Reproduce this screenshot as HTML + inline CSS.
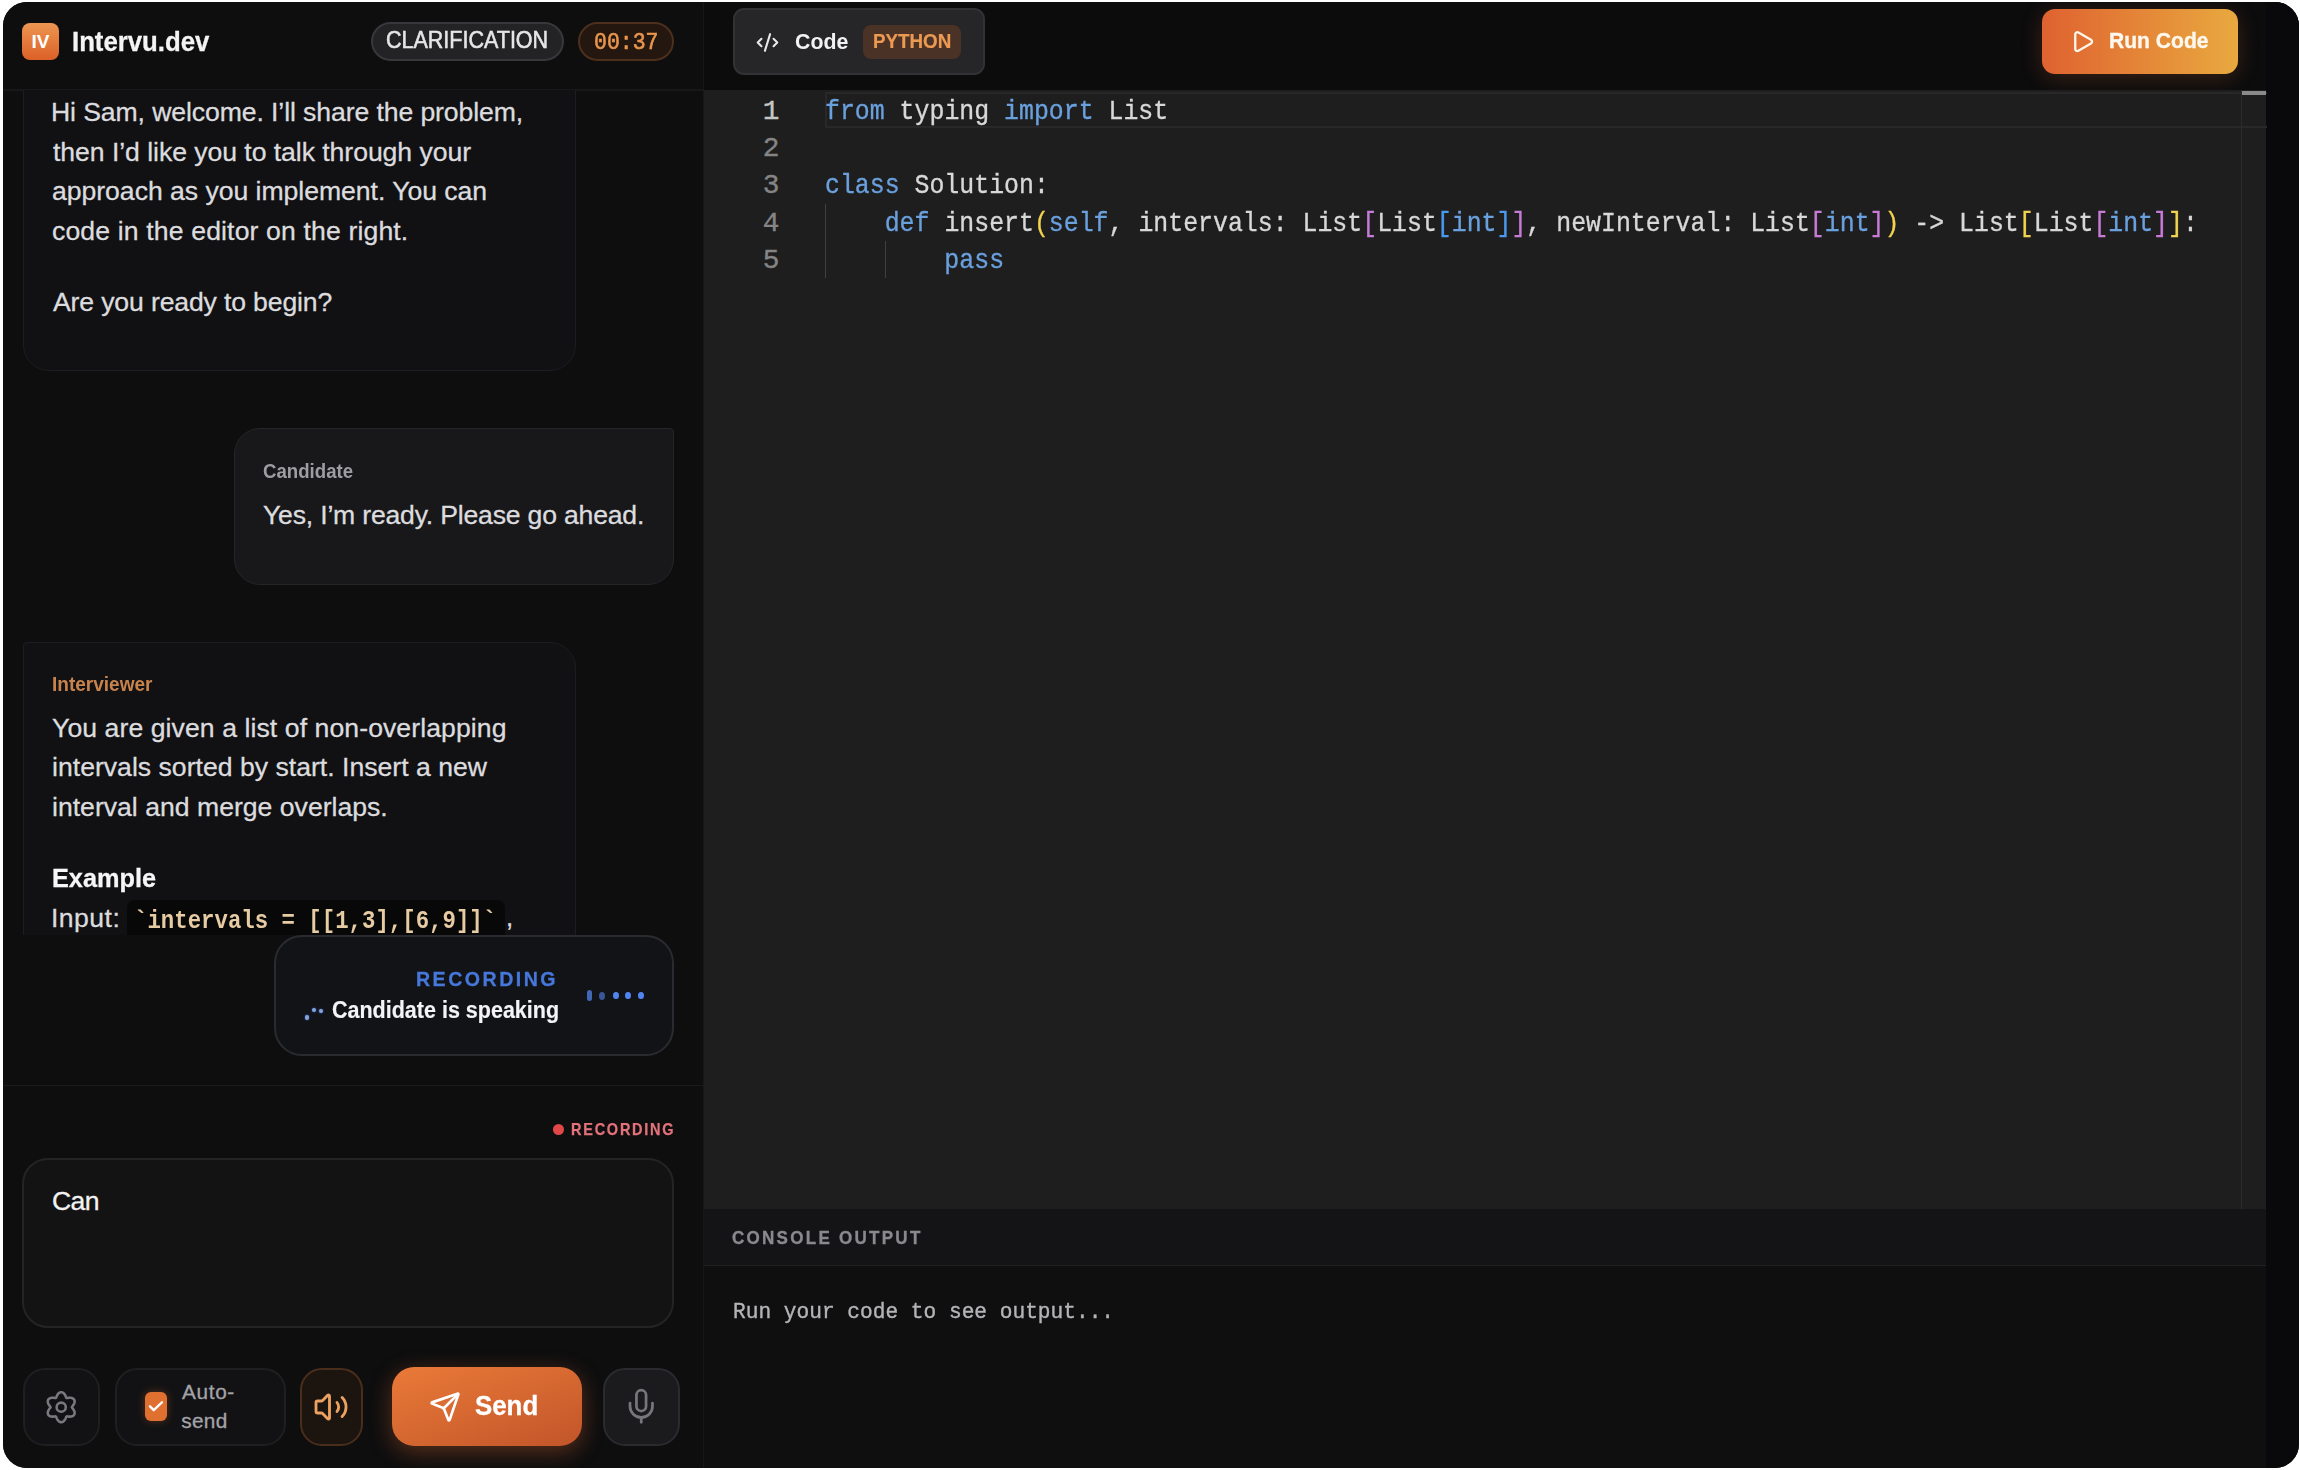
<!DOCTYPE html>
<html><head><meta charset="utf-8">
<style>
*{box-sizing:border-box;margin:0;padding:0}
html,body{width:2300px;height:1470px;background:#fff;overflow:hidden}
body{font-family:"Liberation Sans",sans-serif;position:relative}
.mono{font-family:"Liberation Mono",monospace}
.abs{position:absolute}
#frame{position:absolute;left:0;top:0;width:2300px;height:1470px;clip-path:inset(2px 1px 2px 3px round 24px);background:#0c0c0d}
.txt{position:absolute;white-space:pre;line-height:1;-webkit-text-stroke:0.3px currentColor}
svg{position:absolute;overflow:visible}
.kw{color:#6aa0de}.b1{color:#f2d34f}.b2{color:#c77ad6}.b3{color:#4b98f0}
</style></head>
<body>
<div id="frame">
<!-- LEFT PANEL -->
<div class="abs" style="left:0;top:0;width:703px;height:1470px;background:#0e0e0f"></div>
<div class="abs" style="left:703px;top:0;width:1px;height:1470px;background:#18181b"></div>
<!-- header -->
<div class="abs" style="left:0;top:89px;width:703px;height:2px;background:#18181a"></div>
<div class="abs" style="left:22px;top:23px;width:37px;height:37px;border-radius:8px;background:linear-gradient(#ec9652,#dc6028)"></div>
<div class="txt" style="left:22px;top:32px;width:37px;text-align:center;font-size:19px;font-weight:bold;color:#fff;-webkit-text-stroke:0">IV</div>
<div class="txt" id="t_logo" style="left:71.64px;top:28.6px;font-size:26.74px;font-weight:bold;color:#f4f4f4;letter-spacing:0px;transform:scaleX(0.9627);transform-origin:0 0">Intervu.dev</div>
<div class="abs" style="left:371px;top:22px;width:193px;height:39px;border-radius:20px;background:#232326;border:2px solid #38383c"></div>
<div class="txt" id="t_clar" style="left:385.90px;top:28.94px;font-size:23.69px;color:#e6e6e6;letter-spacing:0px;transform:scaleX(0.9080);transform-origin:0 0;-webkit-text-stroke:0.55px currentColor">CLARIFICATION</div>
<div class="abs" style="left:578px;top:22px;width:96px;height:39px;border-radius:20px;background:#24170f;border:2px solid #4d2f1c"></div>
<div class="txt mono" id="t_timer" style="left:593.66px;top:30.57px;font-size:23.53px;color:#e8964e;letter-spacing:0px;transform:scaleX(0.9130);transform-origin:0 0;-webkit-text-stroke:0.6px currentColor">00:37</div>

<!-- chat scroll area -->
<div class="abs" style="left:0;top:90px;width:703px;height:845px;overflow:hidden">
  <!-- msg1 -->
  <div class="abs" style="left:23px;top:-60px;width:553px;height:341px;border-radius:4px 4px 26px 26px;background:#111114;border:1px solid #1d1d21"></div>
  <!-- candidate -->
  <div class="abs" style="left:234px;top:338px;width:440px;height:157px;border-radius:26px 4px 26px 26px;background:#18181b;border:1px solid #252529"></div>
  <!-- interviewer -->
  <div class="abs" style="left:23px;top:552px;width:553px;height:400px;border-radius:4px 26px 26px 26px;background:#111114;border:1px solid #1d1d21"></div>
</div>
<div id="chattext">
  <div class="txt" id="m1l1" style="left:51.00px;top:98.98px;font-size:26.60px;color:#dcdcdf;letter-spacing:-0.095px">Hi Sam, welcome. I’ll share the problem,</div>
  <div class="txt" id="m1l2" style="left:53.00px;top:138.78px;font-size:26.60px;color:#dcdcdf;letter-spacing:-0.049px">then I’d like you to talk through your</div>
  <div class="txt" id="m1l3" style="left:52.00px;top:178.48px;font-size:26.60px;color:#dcdcdf;letter-spacing:-0.030px">approach as you implement. You can</div>
  <div class="txt" id="m1l4" style="left:52.00px;top:218.08px;font-size:26.60px;color:#dcdcdf;letter-spacing:0.142px">code in the editor on the right.</div>
  <div class="txt" id="m1l5" style="left:53.00px;top:289.38px;font-size:26.60px;color:#dcdcdf;letter-spacing:-0.141px">Are you ready to begin?</div>

  <div class="txt" id="c_lab" style="left:263.04px;top:462.11px;font-size:19.48px;font-weight:bold;color:#9d9da2;letter-spacing:0px;transform:scaleX(0.9570);transform-origin:0 0;-webkit-text-stroke:0">Candidate</div>
  <div class="txt" id="c_l1" style="left:263.00px;top:502.08px;font-size:26.60px;color:#dcdcdf;letter-spacing:-0.194px">Yes, I’m ready. Please go ahead.</div>

  <div class="txt" id="i_lab" style="left:51.63px;top:675.01px;font-size:19.48px;font-weight:bold;color:#c8834c;letter-spacing:0px;transform:scaleX(0.9775);transform-origin:0 0;-webkit-text-stroke:0">Interviewer</div>
  <div class="txt" id="i_l1" style="left:52.00px;top:714.78px;font-size:26.60px;color:#dcdcdf;letter-spacing:0.079px">You are given a list of non-overlapping</div>
  <div class="txt" id="i_l2" style="left:52.00px;top:754.48px;font-size:26.60px;color:#dcdcdf;letter-spacing:0.013px">intervals sorted by start. Insert a new</div>
  <div class="txt" id="i_l3" style="left:52.00px;top:793.98px;font-size:26.60px;color:#dcdcdf;letter-spacing:0.007px">interval and merge overlaps.</div>
  <div class="txt" id="i_ex" style="left:52.05px;top:864.88px;font-size:26.60px;font-weight:bold;color:#f6f6f6;letter-spacing:0px;transform:scaleX(0.9509);transform-origin:0 0">Example</div>
</div>
<div class="abs" style="left:0;top:90px;width:703px;height:845px;overflow:hidden">
  <div class="abs" style="left:127px;top:810px;width:378px;height:50px;border-radius:8px;background:#080809"></div>
  <div class="txt mono" id="i_code" style="left:134px;top:818.9px;font-size:25px;font-weight:bold;color:#e6cba3;transform:scaleX(0.894);transform-origin:0 0;-webkit-text-stroke:0">`intervals = [[1,3],[6,9]]`</div>
  <div class="txt" style="left:506px;top:815px;font-size:25.8px;color:#dcdcdf">,</div>
</div>

<div class="txt" id="i_in" style="left:51.00px;top:904.78px;font-size:26.60px;color:#dcdcdf;letter-spacing:0.460px">Input:</div>
<!-- recording bubble -->
<div class="abs" style="left:274px;top:935px;width:400px;height:121px;border-radius:28px;background:#121317;border:2px solid #2a2b30"></div>
<div class="txt" id="r_lab" style="left:416.20px;top:968.52px;font-size:20.64px;font-weight:bold;letter-spacing:2.605px;color:#4677da;-webkit-text-stroke:0.3px currentColor;transform:scaleX(0.950);transform-origin:0 0">RECORDING</div>
<div class="txt" id="r_txt" style="left:331.61px;top:999.43px;font-size:23.11px;font-weight:bold;color:#f4f4f6;letter-spacing:0px;transform:scaleX(0.9305);transform-origin:0 0;-webkit-text-stroke:0.15px currentColor">Candidate is speaking</div>
<div class="abs" style="left:304.9px;top:1015.3px;width:4.4px;height:4.4px;border-radius:50%;background:#86a4dc;box-shadow:0 0 2px #3a6ad0"></div>
<div class="abs" style="left:311.7px;top:1008.2px;width:4.2px;height:4.2px;border-radius:50%;background:#86a4dc;box-shadow:0 0 2px #3a6ad0"></div>
<div class="abs" style="left:318.6px;top:1009.2px;width:4.2px;height:4.2px;border-radius:50%;background:#86a4dc;box-shadow:0 0 2px #3a6ad0"></div>
<div class="abs" style="left:586.8px;top:990.1px;width:5.6px;height:11px;border-radius:3px;background:#4066b4;filter:blur(0.3px)"></div>
<div class="abs" style="left:598.8px;top:991.6px;width:6px;height:8px;border-radius:50%;background:#3a5696;filter:blur(0.3px)"></div>
<div class="abs" style="left:612.5px;top:991.8px;width:6px;height:7.6px;border-radius:50%;background:#5084ee;filter:blur(0.3px)"></div>
<div class="abs" style="left:624.9px;top:991.8px;width:6px;height:7.6px;border-radius:50%;background:#5084ee;filter:blur(0.3px)"></div>
<div class="abs" style="left:638px;top:991.8px;width:6px;height:7.6px;border-radius:50%;background:#5084ee;filter:blur(0.3px)"></div>

<!-- chat bottom border -->
<div class="abs" style="left:0;top:1085px;width:703px;height:1px;background:#1b1b1e"></div>

<!-- composer -->
<div class="abs" style="left:553px;top:1124px;width:11px;height:11px;border-radius:50%;background:#e04848"></div>
<div class="txt" id="rec2" style="left:570.60px;top:1121.9px;font-size:16.86px;font-weight:bold;letter-spacing:2.035px;color:#e3727a;-webkit-text-stroke:0.25px currentColor;transform:scaleX(0.860);transform-origin:0 0">RECORDING</div>
<div class="abs" style="left:22px;top:1158px;width:652px;height:170px;border-radius:26px;background:#131314;border:2px solid #242426"></div>
<div class="txt" id="can" style="left:52.00px;top:1188.48px;font-size:26.60px;color:#f2f2f2;letter-spacing:-0.600px">Can</div>

<!-- buttons -->
<div class="abs" style="left:23px;top:1368px;width:77px;height:78px;border-radius:22px;background:#121214;border:2px solid #1f1f22"></div>
<svg style="left:45.3px;top:1390.8px" width="32.4" height="32.4" viewBox="0 0 24 24" fill="none" stroke="#78787e" stroke-width="1.9" stroke-linecap="round" stroke-linejoin="round"><path d="M19.90 12.00 L20.03 12.28 L20.23 12.58 L20.47 12.89 L20.72 13.23 L20.97 13.58 L21.21 13.96 L21.43 14.35 L21.62 14.76 L21.78 15.18 L21.88 15.60 L21.94 16.02 L21.94 16.43 L21.89 16.82 L21.78 17.20 L21.61 17.55 L21.39 17.87 L21.12 18.15 L20.80 18.40 L20.45 18.60 L20.06 18.76 L19.64 18.88 L19.20 18.95 L18.75 18.99 L18.30 19.00 L17.86 18.98 L17.42 18.94 L17.01 18.89 L16.62 18.84 L16.26 18.81 L15.95 18.84 L15.77 19.09 L15.62 19.42 L15.46 19.78 L15.30 20.17 L15.12 20.56 L14.91 20.96 L14.68 21.35 L14.42 21.71 L14.14 22.05 L13.83 22.36 L13.49 22.62 L13.14 22.82 L12.77 22.98 L12.39 23.07 L12.00 23.10 L11.61 23.07 L11.23 22.98 L10.86 22.82 L10.51 22.62 L10.17 22.36 L9.86 22.05 L9.58 21.71 L9.32 21.35 L9.09 20.96 L8.88 20.56 L8.70 20.17 L8.54 19.78 L8.38 19.42 L8.23 19.09 L8.05 18.84 L7.74 18.81 L7.38 18.84 L6.99 18.89 L6.58 18.94 L6.14 18.98 L5.70 19.00 L5.25 18.99 L4.80 18.95 L4.36 18.88 L3.94 18.76 L3.55 18.60 L3.20 18.40 L2.88 18.15 L2.61 17.87 L2.39 17.55 L2.22 17.20 L2.11 16.82 L2.06 16.43 L2.06 16.02 L2.12 15.60 L2.22 15.18 L2.38 14.76 L2.57 14.35 L2.79 13.96 L3.03 13.58 L3.28 13.23 L3.53 12.89 L3.77 12.58 L3.97 12.28 L4.10 12.00 L3.97 11.72 L3.77 11.42 L3.53 11.11 L3.28 10.77 L3.03 10.42 L2.79 10.04 L2.57 9.65 L2.38 9.24 L2.22 8.82 L2.12 8.40 L2.06 7.98 L2.06 7.57 L2.11 7.18 L2.22 6.80 L2.39 6.45 L2.61 6.13 L2.88 5.85 L3.20 5.60 L3.55 5.40 L3.94 5.24 L4.36 5.12 L4.80 5.05 L5.25 5.01 L5.70 5.00 L6.14 5.02 L6.58 5.06 L6.99 5.11 L7.38 5.16 L7.74 5.19 L8.05 5.16 L8.23 4.91 L8.38 4.58 L8.54 4.22 L8.70 3.83 L8.88 3.44 L9.09 3.04 L9.32 2.65 L9.58 2.29 L9.86 1.95 L10.17 1.64 L10.51 1.38 L10.86 1.18 L11.23 1.02 L11.61 0.93 L12.00 0.90 L12.39 0.93 L12.77 1.02 L13.14 1.18 L13.49 1.38 L13.83 1.64 L14.14 1.95 L14.42 2.29 L14.68 2.65 L14.91 3.04 L15.12 3.44 L15.30 3.83 L15.46 4.22 L15.62 4.58 L15.77 4.91 L15.95 5.16 L16.26 5.19 L16.62 5.16 L17.01 5.11 L17.42 5.06 L17.86 5.02 L18.30 5.00 L18.75 5.01 L19.20 5.05 L19.64 5.12 L20.06 5.24 L20.45 5.40 L20.80 5.60 L21.12 5.85 L21.39 6.13 L21.61 6.45 L21.78 6.80 L21.89 7.18 L21.94 7.57 L21.94 7.98 L21.88 8.40 L21.78 8.82 L21.62 9.24 L21.43 9.65 L21.21 10.04 L20.97 10.42 L20.72 10.77 L20.47 11.11 L20.23 11.42 L20.03 11.72Z"/><circle cx="12" cy="12" r="3.4"/></svg>

<div class="abs" style="left:115px;top:1368px;width:171px;height:78px;border-radius:22px;background:#121214;border:2px solid #1f1f22"></div>
<div class="abs" style="left:145px;top:1392px;width:22px;height:29px;border-radius:6px;background:#e07030;box-shadow:0 0 8px rgba(224,112,48,.35)"></div>
<svg style="left:147px;top:1397px" width="18" height="18" viewBox="0 0 24 24" fill="none" stroke="#fff" stroke-width="3.2" stroke-linecap="round" stroke-linejoin="round"><path d="M4 12.5l5 5L20 7"/></svg>
<div class="txt" id="auto1" style="left:182.00px;top:1381.50px;font-size:20.79px;color:#a4a4a8;letter-spacing:0.650px">Auto-</div>
<div class="txt" id="auto2" style="left:181.20px;top:1410.70px;font-size:20.79px;color:#a4a4a8;letter-spacing:0.333px">send</div>

<div class="abs" style="left:300px;top:1368px;width:63px;height:78px;border-radius:22px;background:#1c140f;border:2px solid #4a2e1c"></div>
<svg style="left:313px;top:1392px" width="36" height="30" viewBox="0 0 24 20" fill="none" stroke="#eba261" stroke-width="1.9" stroke-linecap="round" stroke-linejoin="round"><path d="M11 2.7a.7.7 0 0 0-1.2-.5L6.4 5.6A1.4 1.4 0 0 1 5.4 6H3a1 1 0 0 0-1 1v6a1 1 0 0 0 1 1h2.4a1.4 1.4 0 0 1 1 .4l3.4 3.4a.7.7 0 0 0 1.2-.5z"/><path d="M16 7a5 5 0 0 1 0 6"/><path d="M19.4 16.4a9 9 0 0 0 0-12.7"/></svg>

<div class="abs" style="left:392px;top:1367px;width:190px;height:79px;border-radius:22px;background:linear-gradient(160deg,#ea7a38,#c2552a);box-shadow:0 6px 22px rgba(232,110,50,.35)"></div>
<svg style="left:429px;top:1391px" width="32" height="32" viewBox="0 0 24 24" fill="none" stroke="#fff" stroke-width="2" stroke-linecap="round" stroke-linejoin="round"><path d="M14.536 21.686a.5.5 0 0 0 .937-.024l6.5-19a.496.496 0 0 0-.635-.635l-19 6.5a.5.5 0 0 0-.024.937l7.93 3.18a2 2 0 0 1 1.112 1.11z"/><path d="m21.854 2.147-10.94 10.939"/></svg>
<div class="txt" id="send" style="left:474.63px;top:1393.01px;font-size:27.04px;font-weight:bold;color:#fff;letter-spacing:0px;transform:scaleX(0.9562);transform-origin:0 0;-webkit-text-stroke:0.3px currentColor">Send</div>

<div class="abs" style="left:603px;top:1368px;width:77px;height:78px;border-radius:22px;background:#1b1b1e;border:2px solid #2b2b2f"></div>
<svg style="left:622px;top:1387px" width="38.5" height="38.5" viewBox="0 0 24 24" fill="none" stroke="#76767c" stroke-width="1.7" stroke-linecap="round" stroke-linejoin="round"><path d="M12 2a3 3 0 0 0-3 3v7a3 3 0 0 0 6 0V5a3 3 0 0 0-3-3Z"/><path d="M19 10v2a7 7 0 0 1-14 0v-2"/><line x1="12" x2="12" y1="19" y2="22"/></svg>

<!-- RIGHT PANEL -->
<div class="abs" style="left:704px;top:0;width:1596px;height:90px;background:#0c0c0d"></div>
<!-- code tab -->
<div class="abs" style="left:733px;top:8px;width:252px;height:67px;border-radius:11px;background:#262629;border:2px solid #323235"></div>
<svg style="left:755px;top:30px" width="25" height="25" viewBox="0 0 24 24" fill="none" stroke="#e8e8ea" stroke-width="2" stroke-linecap="round" stroke-linejoin="round"><path d="m17.8 15.6 3.6-3.6-3.6-3.6"/><path d="m6.2 8.4-3.6 3.6 3.6 3.6"/><path d="m14.5 4-5 16"/></svg>
<div class="txt" id="t_code" style="left:794.64px;top:29.70px;font-size:22.67px;font-weight:bold;color:#f2f2f2;letter-spacing:0px;transform:scaleX(0.9411);transform-origin:0 0;-webkit-text-stroke:0">Code</div>
<div class="abs" style="left:863px;top:25px;width:98px;height:34px;border-radius:8px;background:#4a3226"></div>
<div class="txt" id="t_py" style="left:873.05px;top:31.66px;font-size:19.77px;font-weight:bold;color:#ec9a52;letter-spacing:0px;transform:scaleX(0.9500);transform-origin:0 0;-webkit-text-stroke:0.2px currentColor">PYTHON</div>
<!-- run code -->
<div class="abs" style="left:2042px;top:9px;width:196px;height:65px;border-radius:13px;background:linear-gradient(90deg,#df6230,#e9a93f);box-shadow:0 4px 22px rgba(225,110,50,.22)"></div>
<svg style="left:2070px;top:29.2px" width="25.2" height="25.2" viewBox="0 0 24 24" fill="none" stroke="#fff6ea" stroke-width="2.2" stroke-linecap="round" stroke-linejoin="round"><path d="M5 5a2 2 0 0 1 3.008-1.728l11.997 6.998a2 2 0 0 1 .003 3.458l-12 7A2 2 0 0 1 5 19z"/></svg>
<div class="txt" id="t_run" style="left:2108.87px;top:29.72px;font-size:22.53px;font-weight:bold;color:#fff8ee;letter-spacing:0px;transform:scaleX(0.9362);transform-origin:0 0;-webkit-text-stroke:0.35px currentColor">Run Code</div>

<!-- editor -->
<div class="abs" style="left:704px;top:90px;width:1562px;height:1119px;background:#1e1e1e"></div>
<div class="abs" style="left:2266px;top:0;width:34px;height:1470px;background:#09090b"></div>
<!-- scrollbar -->
<!-- current line -->
<div class="abs" style="left:824.5px;top:91.5px;width:1442px;height:36.5px;border:2.5px solid #282828;border-right:none"></div>
<div class="abs" style="left:2241px;top:90px;width:1px;height:1119px;background:#2c2c2c"></div>
<div class="abs" style="left:2242px;top:91px;width:24px;height:4px;background:#8a8a8a"></div>
<!-- indent guides -->
<div class="abs" style="left:825px;top:204px;width:1px;height:74px;background:#404040"></div>
<div class="abs" style="left:885px;top:241px;width:1px;height:37px;background:#404040"></div>
<!-- line numbers -->
<div class="mono" style="position:absolute;left:741px;top:92.9px;width:60px;text-align:center;font-size:27.8px;line-height:37.3px;color:#858585;-webkit-text-stroke:0.35px currentColor"><div style="color:#c6c6c6">1</div><div>2</div><div>3</div><div>4</div><div>5</div></div>
<div class="mono" id="code" style="position:absolute;left:825px;top:92.9px;font-size:27.8px;line-height:37.3px;color:#d8d8d8;white-space:pre;-webkit-text-stroke:0.35px currentColor;transform:scaleX(0.8945);transform-origin:0 0"><div><span class="kw">from</span> typing <span class="kw">import</span> List</div><div> </div><div><span class="kw">class</span> Solution:</div><div>    <span class="kw">def</span> insert<span class="b1">(</span><span class="kw">self</span>, intervals: List<span class="b2">[</span>List<span class="b3">[</span><span class="kw">int</span><span class="b3">]</span><span class="b2">]</span>, newInterval: List<span class="b2">[</span><span class="kw">int</span><span class="b2">]</span><span class="b1">)</span> -&gt; List<span class="b1">[</span>List<span class="b2">[</span><span class="kw">int</span><span class="b2">]</span><span class="b1">]</span>:</div><div>        <span class="kw">pass</span></div></div>

<!-- console -->
<div class="abs" style="left:704px;top:1209px;width:1562px;height:56px;background:#141416"></div>
<div class="abs" style="left:704px;top:1265px;width:1562px;height:1px;background:#202022"></div>
<div class="txt" id="t_cons" style="left:732.00px;top:1228.6px;font-size:18.90px;font-weight:bold;letter-spacing:2.530px;color:#8a8a8e;-webkit-text-stroke:0.35px currentColor;transform:scaleX(0.900);transform-origin:0 0">CONSOLE OUTPUT</div>
<div class="abs" style="left:704px;top:1266px;width:1562px;height:204px;background:#0f0f10"></div>
<div class="txt mono" id="t_out" style="left:733px;top:1301.1px;font-size:22.5px;color:#b4b4b8;transform:scaleX(0.9407);transform-origin:0 0;-webkit-text-stroke:0.4px currentColor">Run your code to see output...</div>
</div>
</body></html>
